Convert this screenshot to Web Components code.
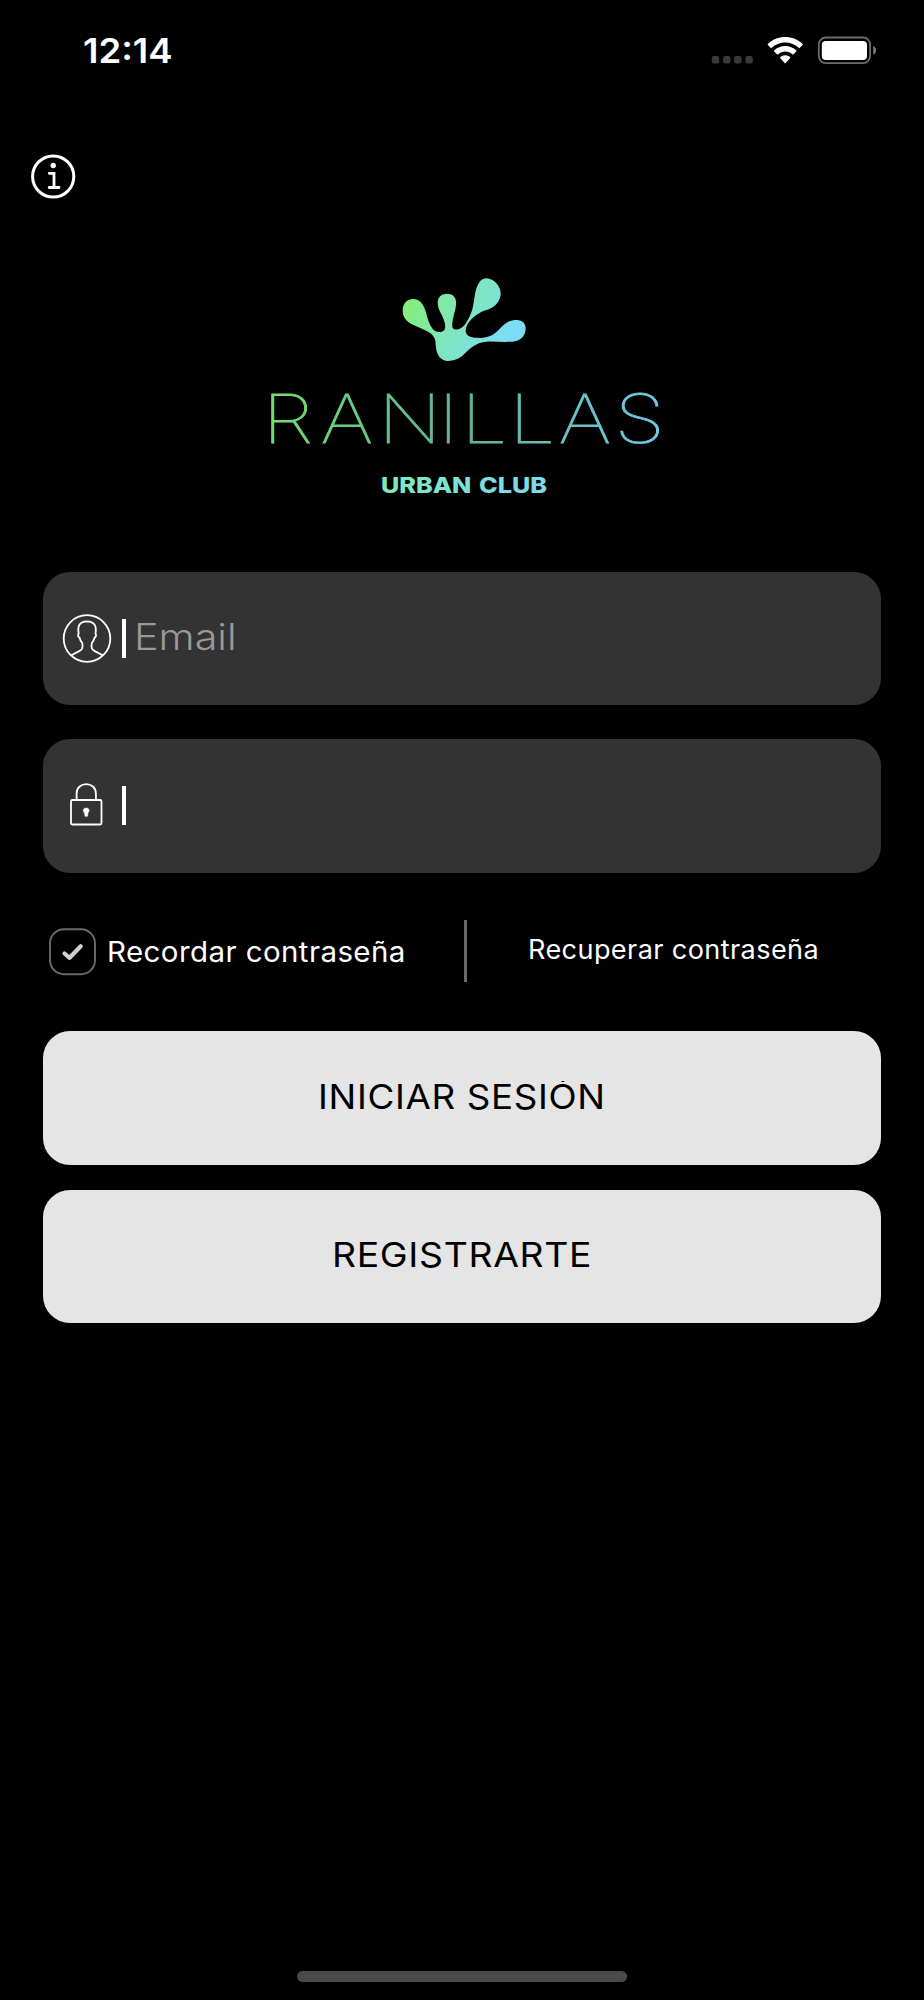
<!DOCTYPE html>
<html lang="es">
<head>
<meta charset="UTF-8">
<title>Ranillas Urban Club</title>
<style>
    body {
        margin: 0;
        background: #000000;
        color: #FFFFFF;
        font-family: Inter, 'Liberation Sans', sans-serif;
    }
</style>
</head>
<body>
<login-pantalla></login-pantalla>

<script>
// Text mit fester Breite: die Schrift wird horizontal passend gestreckt
class TextZeile extends HTMLElement {
    constructor() {
        super();
        this.attachShadow({ mode: 'open' });
        this.shadowRoot.innerHTML = `
        <style>
            :host { display: block; white-space: nowrap; line-height: 1.2; }
            span { display: inline-block; transform-origin: left center; }
        </style>
        <span><slot></slot></span>
    `;
    }

    connectedCallback() {
        const breite = parseFloat(this.getAttribute('breite'));
        const span = this.shadowRoot.querySelector('span');
        const natur = span.offsetWidth;
        this.style.width = `${breite}px`;
        span.style.transform = `scaleX(${breite / natur})`;
    }
}

// Statusleiste mit Uhrzeit, WLAN und Akku
class StatusLeiste extends HTMLElement {
    constructor() {
        super();
        this.attachShadow({ mode: 'open' });
        this.shadowRoot.innerHTML = `
        <style>
            :host {
                display: flex;
                justify-content: space-between;
                align-items: center;
                height: 100px;
                padding: 0 47px 0 83px;
                box-sizing: border-box;
            }
            .zeit { font-size: 34.5px; font-weight: 600; padding-top: 1px; }
            svg { display: block; }
        </style>
        <text-zeile class="zeit" breite="90"><slot></slot></text-zeile>
        <svg width="167" height="32" viewBox="710 34 167 32">
            <g fill="#3A3A3A">
                <rect x="711.8" y="56" width="7.4" height="7.4" rx="2.2"/>
                <rect x="723" y="56" width="7.4" height="7.4" rx="2.2"/>
                <rect x="734.2" y="56" width="7.4" height="7.4" rx="2.2"/>
                <rect x="745.4" y="56" width="7.4" height="7.4" rx="2.2"/>
            </g>
            <g fill="#FFFFFF">
                <path d="M785.2 37C778.5 37 772.4 39.6 767.9 43.9Q767.3 44.5 767.9 45.1L770.5 47.8Q771.1 48.4 771.7 47.8C775.2 44.5 780 42.5 785.2 42.5S795.2 44.5 798.7 47.8Q799.3 48.4 799.9 47.8L802.6 45.1Q803.2 44.5 802.6 43.9C798 39.6 791.9 37 785.2 37Z"/>
                <path d="M785.2 46C781 46 777.1 47.6 774.2 50.3Q773.6 50.9 774.2 51.5L777 54.3Q777.6 54.8 778.2 54.3C780 52.6 782.5 51.6 785.2 51.6S790.4 52.6 792.2 54.3Q792.8 54.8 793.4 54.3L796.2 51.5Q796.8 50.9 796.2 50.3C793.3 47.6 789.4 46 785.2 46Z"/>
                <path d="M785.2 55.3C783.3 55.3 781.6 56 780.4 57.1Q779.8 57.7 780.4 58.3L784.6 62.9Q785.2 63.5 785.8 62.9L790 58.3Q790.6 57.7 790 57.1C788.8 56 787.1 55.3 785.2 55.3Z"/>
                <rect x="821.8" y="41" width="45.2" height="19" rx="4"/>
            </g>
            <rect x="818.8" y="37.5" width="51.3" height="25.6" rx="7" fill="none" stroke="#6B6B6B" stroke-width="1.8"/>
            <path d="M873.2 46C877 47.5 877 53.2 873.2 54.8Z" fill="#7A7A7A"/>
        </svg>
    `;
    }
}

class InfoKnopf extends HTMLElement {
    constructor() {
        super();
        this.attachShadow({ mode: 'open' });
        this.shadowRoot.innerHTML = `
        <style>
            :host { display: block; padding: 53px 0 0 30px; }
            svg { display: block; }
        </style>
        <svg width="47" height="47" viewBox="30 153 47 47" fill="none" stroke="#FFFFFF">
            <circle cx="53.2" cy="176.5" r="20.6" stroke-width="3"/>
            <circle cx="53.2" cy="165.5" r="2.7" fill="#FFFFFF" stroke="none"/>
            <path d="M49.3 173.3H54V187.3M49.2 187.5H59" stroke-width="2.8" stroke-linecap="round"/>
        </svg>
    `;
    }
}

// Logo: Froschfuß und Schriftzug mit Farbverlauf
class RanillasLogo extends HTMLElement {
    constructor() {
        super();
        this.attachShadow({ mode: 'open' });
        this.shadowRoot.innerHTML = `
        <style>
            :host { display: flex; justify-content: center; padding-top: 70px; }
            svg { display: block; overflow: visible; }
            text { font-family: Inter, 'Liberation Sans', sans-serif; }
        </style>
        <svg width="464" height="230" viewBox="230 270 464 230">
            <defs>
                <linearGradient id="fuss" gradientUnits="userSpaceOnUse" x1="85" y1="130" x2="345" y2="290">
                    <stop offset="0" stop-color="#83EE7D"/>
                    <stop offset="0.5" stop-color="#7FE6BE"/>
                    <stop offset="1" stop-color="#7ADDF4"/>
                </linearGradient>
                <!-- Koordinaten im gestreckten System des Schriftzugs -->
                <linearGradient id="name" gradientUnits="userSpaceOnUse" x1="221" y1="0" x2="539" y2="0">
                    <stop offset="0" stop-color="#70E070"/>
                    <stop offset="0.5" stop-color="#62B299"/>
                    <stop offset="1" stop-color="#70CBE6"/>
                </linearGradient>
                <linearGradient id="club" gradientUnits="userSpaceOnUse" x1="382" y1="0" x2="546" y2="0">
                    <stop offset="0" stop-color="#82E8BC"/>
                    <stop offset="1" stop-color="#7BD9F3"/>
                </linearGradient>
            </defs>
            <path transform="translate(380 260) scale(0.33333)" fill="url(#fuss)" d="M68 152C68 130 82 117 99 117C121 117 132 135 138 157C143 178 148 194 158 207C167 218 185 219 193 210C200 197 192 178 181 157C166 128 172 102 201 101C230 102 231 125 226 148C220 173 214 190 218 204C225 213 246 208 256 192C279 158 280 135 284 108C290 71 302 55 320 55C343 57 364 80 362 103C359 130 340 146 316 151C285 162 256 190 257 214C259 231 276 234 302 234C340 233 352 212 370 196C384 183 395 180 411 180C429 181 438 192 437 208C435 230 421 243 397 245C370 247 345 244 320 245C288 247 271 264 252 283C237 297 222 303 204 303C184 302 171 288 168 264C166 247 168 240 161 230C150 213 124 207 102 196C80 186 68 172 68 152Z"/>
            <text transform="scale(1.22 1)" y="443" x="215.2 262.7 309.8 359 377.9 417.2 457.8 503.6" font-size="67.5" font-weight="100" fill="url(#name)" stroke="url(#name)" stroke-width="0.9">RANILLAS</text>
            <text x="381" y="492.8" font-size="21.8" font-weight="800" word-spacing="2" textLength="166" lengthAdjust="spacingAndGlyphs" fill="url(#club)">URBAN CLUB</text>
        </svg>
    `;
    }
}

// Eingabefeld mit Symbol und Cursor
class EingabeFeld extends HTMLElement {
    constructor() {
        super();
        this.attachShadow({ mode: 'open' });
        this.shadowRoot.innerHTML = `
        <style>
            :host {
                display: flex;
                align-items: center;
                height: 133.5px;
                padding-left: 19px;
                box-sizing: border-box;
                border-radius: 27px;
                background: #333333;
                color: #999999;
                font-size: 36.5px;
                font-weight: 300;
            }
            .cursor { width: 4px; height: 39px; margin: 0 8.5px 0 9.5px; background: #FFFFFF; }
        </style>
        <slot name="symbol"></slot>
        <div class="cursor"></div>
        <slot></slot>
    `;
    }
}

class AktionsKnopf extends HTMLElement {
    constructor() {
        super();
        this.attachShadow({ mode: 'open' });
        this.shadowRoot.innerHTML = `
        <style>
            :host {
                display: flex;
                justify-content: center;
                align-items: center;
                height: 133.5px;
                padding-bottom: 3px;
                box-sizing: border-box;
                border-radius: 27px;
                background: #E5E5E5;
                color: #000000;
                font-size: 34.5px;
                letter-spacing: 0.6px;
            }
            /* Oberkante schneidet den Akzent ab */
            div { height: 31px; overflow: hidden; display: flex; align-items: center; }
        </style>
        <div><slot></slot></div>
    `;
    }
}

class LoginPantalla extends HTMLElement {
    constructor() {
        super();
        this.attachShadow({ mode: 'open' });
        this.shadowRoot.innerHTML = `
        <style>
            :host {
                display: flex;
                flex-direction: column;
                height: 2000px;
                background: #000000;
            }
            form { display: flex; flex-direction: column; margin: 71.5px 43px 0; }
            eingabe-feld + eingabe-feld { margin-top: 34px; }
            svg { display: block; flex: none; }
            .optionen { display: flex; height: 158.5px; box-sizing: border-box; padding-top: 47px; letter-spacing: 0.4px; }
            .merken { display: flex; width: 421px; height: 62px; align-items: center; padding: 2px 0 0 5px; box-sizing: border-box; }
            .haken { margin-right: 10px; }
            .merken text-zeile { font-size: 28px; margin-top: 2px; }
            .trenner { width: 2.5px; height: 62px; background: #6A6A6A; }
            .recuperar { font-size: 26.5px; margin: 14.5px 0 0 61.5px; }
            aktions-knopf + aktions-knopf { margin-top: 25px; }
            .home { width: 330px; height: 11px; border-radius: 6px; background: #4A4A4A; margin: auto auto 18px; }
        </style>
        <status-leiste>12:14</status-leiste>
        <info-knopf></info-knopf>
        <ranillas-logo></ranillas-logo>
        <form>
            <eingabe-feld>
                <svg slot="symbol" width="50" height="50" viewBox="62 613 50 50" fill="none" stroke="#FFFFFF" stroke-width="1.8" stroke-linejoin="round">
                    <circle cx="87" cy="638.5" r="23.3"/>
                    <path d="M71.5 655.5C74 653 81 651.5 82.2 648.5C82.8 646.5 82.5 644.5 82.3 643.2C80.5 641.5 80 639.5 79.6 637.8C78 637 77.6 634.5 78.7 633.8C77.5 627 78.5 621.5 87 621.3C95.5 621.5 96.5 627 95.5 633.8C96.5 634.5 96.1 637 94.5 637.8C94.1 639.5 93.5 641.5 91.8 643.2C91.5 644.5 91.2 646.5 91.9 648.5C93 651.5 100 653 102.5 655.5"/>
                </svg>
                <text-zeile breite="103">Email</text-zeile>
            </eingabe-feld>
            <eingabe-feld>
                <svg slot="symbol" width="50" height="50" viewBox="61 781 50 50" fill="none" stroke="#FFFFFF" stroke-width="1.8">
                    <rect x="70" y="800" width="30.5" height="24.5" rx="1.5"/>
                    <path d="M75.6 800V793.5C75.6 781 94.9 781 94.9 793.5V800"/>
                    <path d="M85.2 808C88.5 808 88.8 811.3 87 812.8L86.6 816.3H83.9L83.5 812.8C81.6 811.3 82 808 85.2 808Z" fill="#FFFFFF" stroke-width="0.5"/>
                </svg>
            </eingabe-feld>
            <div class="optionen">
                <div class="merken">
                    <svg class="haken" width="49" height="49" viewBox="48 927 49 49" fill="none">
                        <rect x="50" y="929.3" width="45" height="45" rx="14" stroke="#6A6A6A" stroke-width="1.9"/>
                        <path d="M64.5 953.5L69.6 957.8L80.7 946.3" stroke="#D0D0D0" stroke-width="4.2" stroke-linecap="round" stroke-linejoin="round"/>
                    </svg>
                    <text-zeile breite="299">Recordar contraseña</text-zeile>
                </div>
                <div class="trenner"></div>
                <text-zeile class="recuperar" breite="291">Recuperar contraseña</text-zeile>
            </div>
            <aktions-knopf><text-zeile breite="288">INICIAR SESIÓN</text-zeile></aktions-knopf>
            <aktions-knopf><text-zeile breite="260">REGISTRARTE</text-zeile></aktions-knopf>
        </form>
        <div class="home"></div>
    `;
    }
}

customElements.define('text-zeile', TextZeile);
customElements.define('status-leiste', StatusLeiste);
customElements.define('info-knopf', InfoKnopf);
customElements.define('ranillas-logo', RanillasLogo);
customElements.define('eingabe-feld', EingabeFeld);
customElements.define('aktions-knopf', AktionsKnopf);
customElements.define('login-pantalla', LoginPantalla);
</script>
</body>
</html>
